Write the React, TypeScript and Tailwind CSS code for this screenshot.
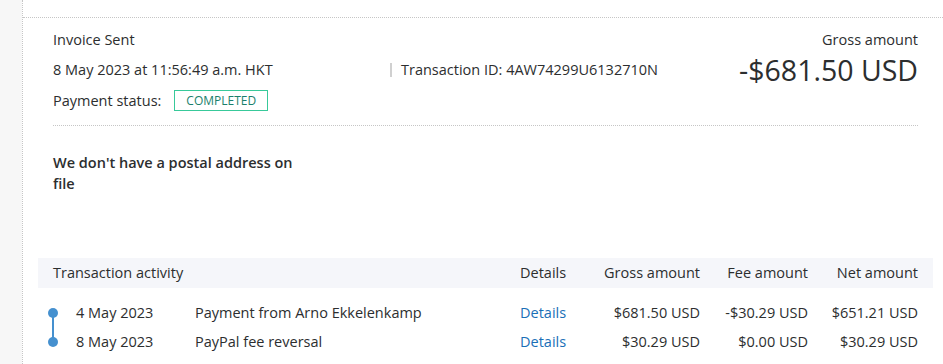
import React from "react";

const rows = [
  { date: "4 May 2023", desc: "Payment from Arno Ekkelenkamp", gross: "$681.50 USD", fee: "-$30.29 USD", net: "$651.21 USD" },
  { date: "8 May 2023", desc: "PayPal fee reversal", gross: "$30.29 USD", fee: "$0.00 USD", net: "$30.29 USD" },
];

export default function App() {
  return (
    <div
      className="flex w-[943px] h-[364px] overflow-hidden bg-white text-[#2c2e2f]"
      style={{ fontFamily: "'Open Sans', 'Noto Sans', sans-serif" }}
    >
      <div className="w-[22px] shrink-0 bg-[#f7f7f7]" />
      <div className="flex-1 border-l border-dotted border-[#c6c6c6] pt-[17px]">
        <div className="border-t border-dotted border-[#c6c6c6] pl-[30px] pr-[25px] pt-[12px]">
          {/* Top section */}
          <div className="flex justify-between">
            <div className="flex flex-col gap-[10px] text-[14.5px] leading-[20px]">
              <div>Invoice Sent</div>
              <div className="flex items-center">
                <span className="w-[337px]">8 May 2023 at 11:56:49 a.m. HKT</span>
                <span className="h-[14px] w-[2px] bg-[#d0d0d0]" />
                <span className="ml-[9px]">Transaction ID: 4AW74299U6132710N</span>
              </div>
              <div className="flex items-center">
                <span>Payment status:</span>
                <span className="ml-[13px] h-[21px] border border-[#38c99a] px-[11px] text-[12px] leading-[19px] text-[#1b7f6c]">
                  COMPLETED
                </span>
              </div>
            </div>
            <div className="flex flex-col items-end">
              <div className="text-[14.5px] leading-[20px]">Gross amount</div>
              <div className="mt-[2px] text-[28.5px] leading-[36px]">-$681.50 USD</div>
            </div>
          </div>

          <div className="mt-[14px] border-t border-dotted border-[#c6c6c6]" />

          <div className="mt-[26px] w-[250px] text-[14.5px] font-semibold leading-[21px]">
            We don't have a postal address on file
          </div>

          {/* Transaction activity */}
          <div className="-mx-[15px] mt-[64px] text-[14.5px] leading-[20px]">
            <div className="grid h-[30px] grid-cols-[38px_119px_325px_80px_100px_108px_110px] items-center bg-[#f5f6fa] pr-[15px]">
              <div className="col-span-3 pl-[15px]">Transaction activity</div>
              <div>Details</div>
              <div className="text-right">Gross amount</div>
              <div className="text-right">Fee amount</div>
              <div className="text-right">Net amount</div>
            </div>
            <div className="mt-[10px]">
              {rows.map((r, i) => (
                <div
                  key={i}
                  className="grid h-[29px] grid-cols-[38px_119px_325px_80px_100px_108px_110px] items-center pr-[15px]"
                >
                  <div className="relative h-full">
                    <span className="absolute left-[10px] top-[10px] h-[10px] w-[10px] rounded-full bg-[#4590cf]" />
                    {i === 0 && (
                      <span className="absolute left-[14px] top-[15px] h-[29px] w-[2px] bg-[#4590cf]" />
                    )}
                  </div>
                  <div>{r.date}</div>
                  <div>{r.desc}</div>
                  <div className="text-[#1a6fb7]">Details</div>
                  <div className="text-right">{r.gross}</div>
                  <div className="text-right">{r.fee}</div>
                  <div className="text-right">{r.net}</div>
                </div>
              ))}
            </div>
          </div>
        </div>
      </div>
    </div>
  );
}
